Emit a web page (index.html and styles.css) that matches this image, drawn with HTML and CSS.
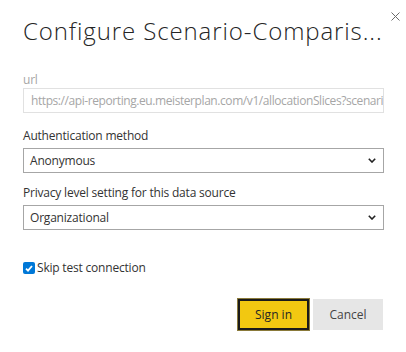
FILE: index.html
```html
<!DOCTYPE html>
<html lang="en">
<head>
<meta charset="utf-8">
<title>Configure Scenario-Comparison</title>
<link rel="stylesheet" href="styles.css">
</head>
<body>
<div class="dialog">
  <button class="close" aria-label="Close">
    <svg width="9" height="9" viewBox="0 0 9 9"><path d="M0.5 0.5 L8.5 8.5 M8.5 0.5 L0.5 8.5" stroke="#6b6b6b" stroke-width="1" fill="none"/></svg>
  </button>
  <h1 class="title">Configure Scenario-Comparis...</h1>
  <div class="field field-url">
    <label class="label label-disabled">url</label>
    <div class="input input-disabled">https://api-reporting.eu.meisterplan.com/v1/allocationSlices?scenari</div>
  </div>
  <div class="field field-auth">
    <label class="label">Authentication method</label>
    <div class="input select">
      <span>Anonymous</span>
      <svg class="chev" width="8" height="5" viewBox="0 0 8 5"><path d="M0.8 0.8 L4 4 L7.2 0.8" stroke="#222" stroke-width="1.6" fill="none"/></svg>
    </div>
  </div>
  <div class="field field-privacy">
    <label class="label">Privacy level setting for this data source</label>
    <div class="input select">
      <span>Organizational</span>
      <svg class="chev" width="8" height="5" viewBox="0 0 8 5"><path d="M0.8 0.8 L4 4 L7.2 0.8" stroke="#222" stroke-width="1.6" fill="none"/></svg>
    </div>
  </div>
  <div class="check-row">
    <span class="checkbox">
      <svg width="8" height="7" viewBox="0 0 8 7"><path d="M1 3.6 L3 5.6 L7 1" stroke="#fff" stroke-width="1.8" fill="none"/></svg>
    </span>
    <span class="check-label">Skip test connection</span>
  </div>
  <div class="buttons">
    <button class="btn btn-primary">Sign in</button>
    <button class="btn btn-secondary">Cancel</button>
  </div>
</div>
</body>
</html>
```
FILE: styles.css
```css
html, body {
  margin: 0;
  padding: 0;
  background: #ffffff;
}
body {
  font-family: "Open Sans", "Noto Sans", sans-serif;
  color: #333333;
  width: 406px;
  height: 352px;
  overflow: hidden;
}
.dialog {
  position: relative;
  padding: 16px 22px 0 23px;
  display: flex;
  flex-direction: column;
}
.close {
  position: absolute;
  top: 12px;
  left: 391px;
  border: 0;
  background: none;
  padding: 0;
  width: 9px;
  height: 9px;
  display: block;
}
.close svg { display: block; }
.title {
  margin: 0;
  font-size: 24px;
  font-weight: 300;
  line-height: 30px;
  color: #252525;
  white-space: nowrap;
  letter-spacing: 0.9px;
}
.field {
  display: flex;
  flex-direction: column;
}
.field-url { margin-top: 26px; }
.field-auth { margin-top: 15px; }
.field-privacy { margin-top: 12px; }
.label {
  font-size: 12px;
  line-height: 16px;
  color: #333333;
  margin-bottom: 4px;
  letter-spacing: -0.2px;
}
.label-disabled {
  color: #a6a6a6;
  margin-bottom: 0;
}
.input {
  box-sizing: border-box;
  height: 25px;
  width: 361px;
  border: 1px solid #a6a6a6;
  padding: 0 6px;
  font-size: 12px;
  line-height: 23px;
  color: #333333;
  white-space: nowrap;
  overflow: hidden;
  letter-spacing: -0.2px;
}
.input-disabled {
  border-color: #e1e1e1;
  color: #a6a6a6;
  padding-left: 7px;
  padding-right: 1px;
  letter-spacing: -0.42px;
}
.select {
  display: flex;
  align-items: center;
  justify-content: space-between;
  padding-right: 7px;
}
.chev { display: block; }
.check-row {
  display: flex;
  align-items: center;
  margin-top: 30px;
}
.checkbox {
  box-sizing: border-box;
  width: 12px;
  height: 12px;
  background: #0078d7;
  border-radius: 2px;
  display: flex;
  align-items: center;
  justify-content: center;
}
.checkbox svg { display: block; }
.check-label {
  margin-left: 2px;
  font-size: 12px;
  line-height: 16px;
  color: #333333;
  letter-spacing: -0.2px;
}
.buttons {
  display: flex;
  justify-content: flex-end;
  gap: 4px;
  margin-top: 23px;
  margin-right: 1px;
}
.btn {
  box-sizing: border-box;
  height: 31px;
  font-family: "Open Sans", "Noto Sans", sans-serif;
  font-size: 12px;
  color: #252525;
  padding: 0;
  cursor: pointer;
}
.btn-primary {
  width: 71px;
  background: #f2c811;
  border: 2px solid #1a1a1a;
  box-shadow: 0 0 0 1px #8a7a3a;
}
.btn-secondary {
  width: 70px;
  background: #e6e6e6;
  border: 0;
  color: #444444;
}
```
